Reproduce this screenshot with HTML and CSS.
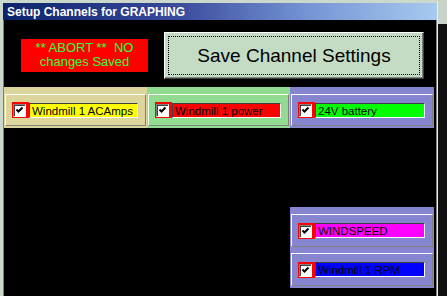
FILE: index.html
```html
<!DOCTYPE html>
<html lang="en">
<head>
    <meta charset="UTF-8">
    <title>Setup Channels for GRAPHING</title>
    <link rel="stylesheet" href="styles.css">
</head>
<body>
    <div class="screen">
        <div class="window">
            <div class="titlebar">Setup Channels for GRAPHING</div>
            <div class="client">
                <div class="top-area">
                    <div class="abort">** ABORT **&nbsp; NO<br>changes Saved</div>
                    <button class="save"><span class="focus">Save Channel Settings</span></button>
                </div>

                <div class="channel-row">
                    <div class="panel tan">
                        <div class="frame">
                            <span class="flag"><span class="check"><svg width="9" height="9" viewBox="0 0 9 9"><polyline points="1.5,3.5 3.5,5.5 7.5,1.5" /></svg></span></span>
                            <span class="field yellow">Windmill 1 ACAmps</span>
                        </div>
                    </div>
                    <div class="panel mint">
                        <div class="frame">
                            <span class="flag"><span class="check"><svg width="9" height="9" viewBox="0 0 9 9"><polyline points="1.5,3.5 3.5,5.5 7.5,1.5" /></svg></span></span>
                            <span class="field red">Windmill 1 power</span>
                        </div>
                    </div>
                    <div class="panel violet">
                        <div class="frame">
                            <span class="flag"><span class="check"><svg width="9" height="9" viewBox="0 0 9 9"><polyline points="1.5,3.5 3.5,5.5 7.5,1.5" /></svg></span></span>
                            <span class="field green">24V battery</span>
                        </div>
                    </div>
                </div>

                <div class="extra-group">
                    <div class="frame">
                        <span class="flag"><span class="check"><svg width="9" height="9" viewBox="0 0 9 9"><polyline points="1.5,3.5 3.5,5.5 7.5,1.5" /></svg></span></span>
                        <span class="field magenta">WINDSPEED</span>
                    </div>
                    <div class="frame">
                        <span class="flag"><span class="check"><svg width="9" height="9" viewBox="0 0 9 9"><polyline points="1.5,3.5 3.5,5.5 7.5,1.5" /></svg></span></span>
                        <span class="field blue">Windmill 1 RPM</span>
                    </div>
                </div>
            </div>
        </div>
        <div class="desk-edge"></div>
    </div>
</body>
</html>
```

FILE: styles.css
```css
body {
    margin: 0;
    font-family: 'Liberation Sans', Arial, sans-serif;
    background: #c8d4c8;
}
.screen {
    display: flex;
    width: 447px;
    height: 296px;
    overflow: hidden;
    background: #c8d4c8;
}
.window {
    width: 438px;
    box-sizing: border-box;
    border-top: 3px solid #ccd8cc;
    border-left: 3px solid #ccd8cc;
    border-right: 1px solid #e8f0e8;
    display: flex;
    flex-direction: column;
}
.titlebar {
    height: 17px;
    box-sizing: border-box;
    padding: 2px 0 0 4px;
    line-height: 15px;
    font-size: 12px;
    font-weight: bold;
    color: #ffffff;
    background: linear-gradient(to right, #0a246a 0%, #3a4a9c 40%, #7494d4 70%, #a6caf0 100%);
}
.client {
    flex: 1;
    background: #000000;
    border-left: 1px solid #808080;
    border-right: 1px solid #808080;
}
.top-area {
    display: flex;
    align-items: flex-start;
    height: 67px;
}
.abort {
    margin: 19px 0 0 17px;
    width: 127px;
    height: 33px;
    box-sizing: border-box;
    padding-top: 2px;
    background: #ff0000;
    color: #33ff33;
    font-size: 13px;
    line-height: 14px;
    text-align: center;
}
.save {
    margin: 12px 0 0 16px;
    width: 260px;
    height: 47px;
    padding: 3px;
    box-sizing: border-box;
    background: #c4dcc4;
    border: 1px solid;
    border-color: #ffffff #404040 #404040 #ffffff;
    box-shadow: inset -1px -1px #808080;
    font-family: inherit;
    font-size: 19px;
    color: #000000;
}
.focus {
    display: flex;
    align-items: center;
    justify-content: center;
    height: 100%;
    border: 1px dotted #000000;
    box-sizing: border-box;
}
.channel-row {
    display: flex;
    height: 41px;
}
.panel {
    width: 143px;
    box-sizing: border-box;
    padding: 7px 1px 2px 1px;
}
.panel.violet {
    width: 144px;
}
.tan { background: #dcd69c; }
.mint { background: #92dc92; }
.violet, .extra-group { background: #8686d0; }
.frame {
    display: flex;
    align-items: center;
    height: 100%;
    box-sizing: border-box;
    padding: 0 7px 0 6px;
    border: 1px solid;
    border-color: #ffffff #808080 #808080 #ffffff;
}
.flag {
    display: flex;
    align-items: center;
    width: 17px;
    height: 16px;
    box-sizing: border-box;
    padding: 1px 0 0 1px;
    background: #ff0000;
    flex-shrink: 0;
}
.check {
    display: block;
    width: 13px;
    height: 13px;
    box-sizing: border-box;
    border: 1px solid;
    border-color: #808080 #ffffff #ffffff #808080;
    box-shadow: inset 1px 1px #404040;
    background: #ffffff;
    padding: 1px 0 0 1px;
}
.check svg {
    display: block;
}
.check polyline {
    fill: none;
    stroke: #000000;
    stroke-width: 2;
}
.field {
    flex: 1;
    height: 15px;
    box-sizing: border-box;
    border: 1px solid;
    border-color: #404040 #ffffff #ffffff #404040;
    padding: 1px 0 0 2px;
    font-size: 11.5px;
    line-height: 12px;
    color: #000000;
    white-space: nowrap;
    overflow: hidden;
}
.yellow { background: #ffff00; }
.red { background: #ff0000; }
.green { background: #00ff00; }
.magenta { background: #ff00ff; }
.blue { background: #0000ff; }
.extra-group {
    display: flex;
    flex-direction: column;
    gap: 6px;
    width: 144px;
    height: 81px;
    box-sizing: border-box;
    margin: 79px 0 0 286px;
    padding: 7px 1px 2px 1px;
}
.extra-group .frame {
    height: 33px;
}
.desk-edge {
    flex: 1;
    background: linear-gradient(#c8d4c8 0 24px, #101010 24px);
}
```
